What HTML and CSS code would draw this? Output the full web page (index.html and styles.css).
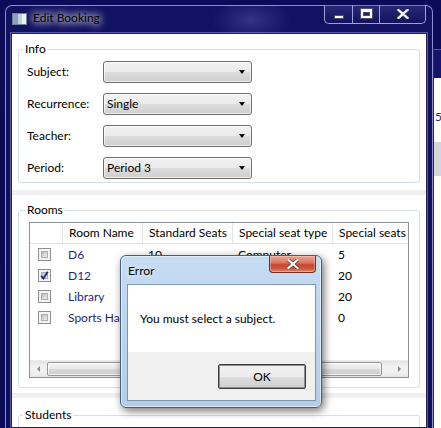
FILE: index.html
```html
<!DOCTYPE html>
<html>
<head>
<meta charset="utf-8">
<title>Edit Booking</title>
<link rel="stylesheet" href="styles.css">
</head>
<body>
<div class="desktop">
  <div class="bgwin">
    <div class="bgwin-title"></div>
    <div class="bgwin-body">
      <span class="bgwin-digit">5</span>
      <div class="bgwin-band"></div>
    </div>
  </div>

  <div class="window">
    <div class="titlebar">
      <svg class="appicon" width="15" height="12" viewBox="0 0 15 12">
        <rect x="0.5" y="0.5" width="14" height="11" fill="#c3d0dc" stroke="#70839a"/>
        <rect x="1" y="1" width="5" height="10" fill="#8aa2bb"/>
        <rect x="10" y="1" width="4" height="10" fill="#e9f5f2"/>
      </svg>
      <span class="title">Edit Booking</span>
      <div class="caption">
        <div class="cbtn cbtn-min"><span class="glyph-min"></span></div>
        <div class="cbtn cbtn-max"><span class="glyph-max"></span></div>
        <div class="cbtn cbtn-close">
          <svg width="12" height="10" viewBox="0 0 12 10">
            <path d="M1.5 1 L10.5 9 M10.5 1 L1.5 9" stroke="#3a3a5a" stroke-width="3.6" stroke-linecap="square"/>
            <path d="M1.5 1 L10.5 9 M10.5 1 L1.5 9" stroke="#ffffff" stroke-width="2.2" stroke-linecap="square"/>
          </svg>
        </div>
      </div>
    </div>

    <div class="client">
      <section class="panel panel-info">
        <fieldset class="group">
          <legend>Info</legend>
          <div class="form">
            <span class="form-label">Subject:</span>
            <div class="combo"><span class="combo-text"></span><span class="combo-arrow"></span></div>
            <span class="form-label">Recurrence:</span>
            <div class="combo"><span class="combo-text">Single</span><span class="combo-arrow"></span></div>
            <span class="form-label">Teacher:</span>
            <div class="combo"><span class="combo-text"></span><span class="combo-arrow"></span></div>
            <span class="form-label">Period:</span>
            <div class="combo"><span class="combo-text">Period 3</span><span class="combo-arrow"></span></div>
          </div>
        </fieldset>
      </section>

      <div class="sep"></div>

      <section class="panel panel-rooms">
        <fieldset class="group">
          <legend>Rooms</legend>
          <div class="grid">
            <div class="grid-scroll">
              <div class="grid-row grid-head">
                <div class="cell"></div>
                <div class="cell">Room Name</div>
                <div class="cell">Standard Seats</div>
                <div class="cell">Special seat type</div>
                <div class="cell">Special seats</div>
              </div>
              <div class="grid-row">
                <div class="cell cell-check"><span class="checkbox"></span></div>
                <div class="cell cell-name">D6</div>
                <div class="cell">10</div>
                <div class="cell">Computer</div>
                <div class="cell">5</div>
              </div>
              <div class="grid-row">
                <div class="cell cell-check"><span class="checkbox checked">
                  <svg width="9" height="9" viewBox="0 0 9 9"><path d="M1.2 4.8 L3.4 7.6 L7.8 0.8" fill="none" stroke="#1d2a80" stroke-width="1.8"/></svg>
                </span></div>
                <div class="cell cell-name">D12</div>
                <div class="cell"></div>
                <div class="cell"></div>
                <div class="cell">20</div>
              </div>
              <div class="grid-row">
                <div class="cell cell-check"><span class="checkbox"></span></div>
                <div class="cell cell-name">Library</div>
                <div class="cell"></div>
                <div class="cell"></div>
                <div class="cell">20</div>
              </div>
              <div class="grid-row">
                <div class="cell cell-check"><span class="checkbox"></span></div>
                <div class="cell cell-name cell-clipped">Sports Ha</div>
                <div class="cell"></div>
                <div class="cell"></div>
                <div class="cell">0</div>
              </div>
            </div>
            <div class="hscroll">
              <div class="sb-btn"><span class="arrow-left"></span></div>
              <div class="sb-track"><div class="sb-thumb"></div></div>
              <div class="sb-btn"><span class="arrow-right"></span></div>
            </div>
          </div>
        </fieldset>
      </section>

      <div class="sep sep-2"></div>

      <section class="panel panel-students">
        <fieldset class="group group-open">
          <legend>Students</legend>
        </fieldset>
      </section>
    </div>
  </div>

  <div class="dialog">
    <div class="dialog-title">
      <span class="dialog-caption">Error</span>
      <div class="dialog-close">
        <svg width="12" height="10" viewBox="0 0 12 10">
          <path d="M1.5 1 L10.5 9 M10.5 1 L1.5 9" stroke="#5a2a24" stroke-width="3.6" stroke-linecap="square"/>
          <path d="M1.5 1 L10.5 9 M10.5 1 L1.5 9" stroke="#ffffff" stroke-width="2.2" stroke-linecap="square"/>
        </svg>
      </div>
    </div>
    <div class="dialog-client">
      <div class="dialog-message">You must select a subject.</div>
      <div class="dialog-footer">
        <button class="btn-ok">OK</button>
      </div>
    </div>
  </div>
</div>
</body>
</html>
```

FILE: styles.css
```css
* { box-sizing: border-box; }

html, body {
  margin: 0;
  padding: 0;
  width: 441px;
  height: 428px;
  overflow: hidden;
}

body {
  font-family: "Lato", "Noto Sans", sans-serif;
  font-size: 12px;
  color: #000;
  background: #0c0b5a;
}

.desktop {
  position: relative;
  width: 441px;
  height: 428px;
  padding: 5px 0 0 5px;
  background: #0c0b5a;
}

/* window behind, at the right edge */
.bgwin {
  position: absolute;
  left: 433px;
  top: 49px;
  width: 30px;
  height: 400px;
  border-left: 1px solid #2a2a50;
}
.bgwin-title {
  height: 29px;
  border-top: 1px solid #5a5f9a;
  background: #15146a;
}
.bgwin-body {
  position: relative;
  height: 371px;
  background: #fff;
  padding-top: 31px;
}
.bgwin-digit {
  display: block;
  color: #1d2a80;
  margin-left: 1px;
  line-height: 16px;
}
.bgwin-band {
  margin-top: 17px;
  height: 34px;
  background: #d6d6d6;
}

/* main window */
.window {
  width: 428px;
  height: 423px;
  border: 1px solid #8a8fcc;
  border-bottom: none;
  border-radius: 7px 7px 0 0;
  padding: 0 5px;
  background:
    radial-gradient(ellipse 40px 22px at 245px 14px, rgba(90, 90, 180, 0.45), rgba(90, 90, 180, 0)),
    linear-gradient(180deg, #121262 0%, #0f0e5e 100%);
  display: flex;
  flex-direction: column;
}

.titlebar {
  height: 27px;
  display: flex;
  align-items: flex-start;
  flex: none;
}

.appicon {
  margin: 7px 0 0 1px;
  flex: none;
}

.title {
  margin: 4px 0 0 6px;
  line-height: 16px;
  font-size: 12px;
  color: #000;
  text-shadow:
    0 0 6px rgba(255, 255, 255, 0.9),
    0 0 10px rgba(255, 255, 255, 0.8),
    0 0 14px rgba(255, 255, 255, 0.6);
}

.caption {
  margin: -1px 1px 0 auto;
  height: 19px;
  display: flex;
  border: 1px solid #9da2d6;
  border-top: none;
  border-radius: 0 0 5px 5px;
  overflow: hidden;
  background: linear-gradient(180deg, rgba(80, 85, 160, 0.35), rgba(20, 20, 90, 0.2));
}
.cbtn {
  height: 100%;
  position: relative;
  display: flex;
  align-items: center;
  justify-content: center;
}
.cbtn + .cbtn { border-left: 1px solid #9da2d6; }
.cbtn-min { width: 27px; }
.cbtn-max { width: 27px; }
.cbtn-close { width: 46px; }

.glyph-min {
  width: 10px;
  height: 4px;
  margin-top: 6px;
  background: #fff;
  border: 1px solid #50506e;
}
.glyph-max {
  width: 11px;
  height: 9px;
  margin-top: -1px;
  border: 2px solid #fff;
  border-top-width: 3px;
  box-shadow: 0 0 0 1px #50506e, inset 0 0 0 1px #50506e;
}
.cbtn-close svg { margin-top: -1px; }

/* client area */
.client {
  flex: 1;
  background: #fff;
  border: 1px solid #242450;
  box-shadow: 0 0 0 1px rgba(150, 160, 220, 0.5);
  overflow: hidden;
}

.panel {
  padding: 8px 6px 7px 6px;
}
.panel-rooms { padding: 8px 6px 5px 6px; }
.panel-students { padding: 10px 6px 0 6px; }

.sep {
  height: 5px;
  background: #f0f0f0;
}

.group {
  margin: 0;
  min-width: 0;
  border: 1px solid #d5dfe5;
  border-radius: 3px;
  padding: 5px 8px 3px 8px;
}
.group legend {
  padding: 0 2px;
  margin-left: -4px;
  line-height: 14px;
  font-size: 12px;
}
.group-open {
  height: 40px;
}

.form {
  display: grid;
  grid-template-columns: 76px 149px;
  row-gap: 10px;
  align-items: center;
}
.form-label {
  line-height: 16px;
}

.combo {
  height: 22px;
  border: 1px solid #707070;
  border-radius: 3px;
  background: linear-gradient(180deg, #f2f2f2 0%, #ebebeb 50%, #dddddd 50%, #cfcfcf 100%);
  box-shadow: inset 0 0 0 1px rgba(255, 255, 255, 0.6);
  display: flex;
  align-items: center;
  padding: 0 5px 0 3px;
}
.combo-text {
  flex: 1;
  line-height: 16px;
}
.combo-arrow {
  width: 0;
  height: 0;
  border-left: 3.5px solid transparent;
  border-right: 3.5px solid transparent;
  border-top: 4px solid #000;
  margin-right: 1px;
}

/* rooms grid */
.panel-rooms .group {
  padding: 5px 10px 9px 10px;
}
.grid {
  height: 156px;
  border: 1px solid #8e9296;
  display: flex;
  flex-direction: column;
  overflow: hidden;
}
.grid-scroll {
  flex: 1;
  overflow: hidden;
}
.grid-row {
  display: grid;
  grid-template-columns: 32px 80px 90px 100px 100px;
  height: 21px;
  width: 402px;
}
.grid-head {
  border-bottom: 1px solid #e3e3e3;
}
.grid-head .cell + .cell {
  border-left: 1px solid #e3e3e3;
}
.grid-head .cell:first-child { background: #fff; }
.cell {
  padding-left: 6px;
  line-height: 20px;
  white-space: nowrap;
  overflow: hidden;
}
.grid-row:not(.grid-head) .cell { line-height: 21px; }
.cell-name { color: #1f1f7e; }
.cell-check {
  padding-left: 8px;
  display: flex;
  align-items: center;
}

.checkbox {
  position: relative;
  width: 13px;
  height: 13px;
  border: 1px solid #8e8f8f;
  background: #f4f4f4;
  display: block;
}
.checkbox::before {
  content: "";
  position: absolute;
  inset: 2px;
  background: linear-gradient(135deg, #b6bac0 0%, #dcdde0 60%, #eeeeee 100%);
  border: 1px solid #a9aeb4;
}
.checkbox svg {
  position: absolute;
  left: 1px;
  top: 1px;
  z-index: 1;
}

.hscroll {
  height: 17px;
  flex: none;
  display: flex;
  background: linear-gradient(180deg, #e3e3e3 0%, #f1f1f1 30%, #f1f1f1 70%, #e6e6e6 100%);
  border-top: 1px solid #ececec;
}
.sb-btn {
  width: 17px;
  display: flex;
  align-items: center;
  justify-content: center;
}
.arrow-left, .arrow-right {
  width: 0;
  height: 0;
  border-top: 3px solid transparent;
  border-bottom: 3px solid transparent;
}
.arrow-left { border-right: 3px solid #8a8a8a; }
.arrow-right { border-left: 3px solid #8a8a8a; }
.sb-track {
  flex: 1;
  padding: 1px 0;
}
.sb-thumb {
  width: 335px;
  height: 100%;
  border: 1px solid #979797;
  border-radius: 2px;
  background: linear-gradient(180deg, #f3f3f3 0%, #e8e8e8 50%, #d9d9d9 51%, #cfcfcf 100%);
  box-shadow: inset 0 0 0 1px rgba(255, 255, 255, 0.7);
}

/* error dialog */
.dialog {
  position: absolute;
  left: 120px;
  top: 255px;
  width: 202px;
  height: 153px;
  border: 1px solid #4b5d73;
  border-radius: 6px;
  padding: 0 5px 6px 6px;
  background: linear-gradient(180deg, #c6dcf3 0%, #bdd5ee 40%, #b4cde8 100%);
  box-shadow:
    inset 0 0 0 1px rgba(255, 255, 255, 0.55),
    2px 3px 8px rgba(0, 0, 0, 0.55);
  display: flex;
  flex-direction: column;
}
.dialog-title {
  height: 28px;
  flex: none;
  display: flex;
  align-items: flex-start;
}
.dialog-caption {
  margin: 7px 0 0 1px;
  line-height: 16px;
  text-shadow: 0 0 6px rgba(255, 255, 255, 0.9);
}
.dialog-close {
  margin-left: auto;
  width: 47px;
  height: 17px;
  border: 1px solid #6e2c22;
  border-top: none;
  border-radius: 0 0 4px 4px;
  background: linear-gradient(180deg, #e9a595 0%, #db7b66 40%, #c6462d 55%, #cc5a40 80%, #dd8a70 100%);
  box-shadow: inset 0 0 0 1px rgba(255, 210, 200, 0.45);
  display: flex;
  align-items: center;
  justify-content: center;
}

.dialog-client {
  flex: 1;
  border: 1px solid #8195ad;
  background: #fff;
  display: flex;
  flex-direction: column;
}
.dialog-message {
  height: 67px;
  padding-left: 12px;
  display: flex;
  align-items: center;
  line-height: 16px;
}
.dialog-footer {
  flex: 1;
  background: #f0f0f0;
  display: flex;
  align-items: center;
  justify-content: flex-end;
  padding-right: 9px;
}
.btn-ok {
  width: 88px;
  height: 25px;
  border: 1px solid #3c3c3c;
  border-radius: 2px;
  box-shadow: inset 0 0 0 1px #8e8e8e;
  background: linear-gradient(180deg, #f2f2f2 0%, #ebebeb 50%, #dddddd 51%, #cfcfcf 100%);
  font-family: inherit;
  font-size: 12px;
  color: #000;
  padding: 0;
}
```
